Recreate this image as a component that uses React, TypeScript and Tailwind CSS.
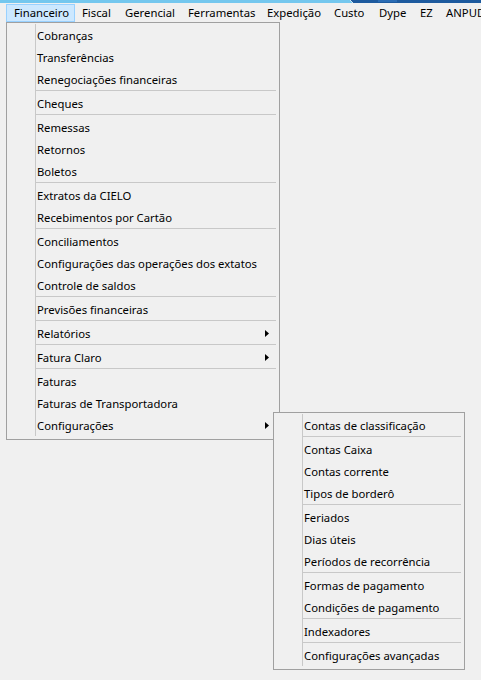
import { Fragment } from 'react';

type Entry = { label: string; sub?: boolean } | 'sep';

const bar = [
  { label: 'Financeiro', w: 'w-[69px]', active: true },
  { label: 'Fiscal', w: 'w-[43px]' },
  { label: 'Gerencial', w: 'w-[63px]' },
  { label: 'Ferramentas', w: 'w-[79px]' },
  { label: 'Expedição', w: 'w-[67px]' },
  { label: 'Custo', w: 'w-[45px]' },
  { label: 'Dype', w: 'w-[41px]' },
  { label: 'EZ', w: 'w-[26px]' },
  { label: 'ANPUD', w: 'w-[60px]' },
];

const financeiro: Entry[] = [
  { label: 'Cobranças' },
  { label: 'Transferências' },
  { label: 'Renegociações financeiras' },
  'sep',
  { label: 'Cheques' },
  'sep',
  { label: 'Remessas' },
  { label: 'Retornos' },
  { label: 'Boletos' },
  'sep',
  { label: 'Extratos da CIELO' },
  { label: 'Recebimentos por Cartão' },
  'sep',
  { label: 'Conciliamentos' },
  { label: 'Configurações das operações dos extatos' },
  { label: 'Controle de saldos' },
  'sep',
  { label: 'Previsões financeiras' },
  'sep',
  { label: 'Relatórios', sub: true },
  'sep',
  { label: 'Fatura Claro', sub: true },
  'sep',
  { label: 'Faturas' },
  { label: 'Faturas de Transportadora' },
  { label: 'Configurações', sub: true },
];

const configuracoes: Entry[] = [
  { label: 'Contas de classificação' },
  'sep',
  { label: 'Contas Caixa' },
  { label: 'Contas corrente' },
  { label: 'Tipos de borderô' },
  'sep',
  { label: 'Feriados' },
  { label: 'Dias úteis' },
  { label: 'Períodos de recorrência' },
  'sep',
  { label: 'Formas de pagamento' },
  { label: 'Condições de pagamento' },
  'sep',
  { label: 'Indexadores' },
  'sep',
  { label: 'Configurações avançadas' },
];

function Arrow() {
  return (
    <svg width="4" height="7" viewBox="0 0 4 7" className="block">
      <path d="M0 0 L4 3.5 L0 7 Z" fill="#000" />
    </svg>
  );
}

function Menu({ items, className }: { items: Entry[]; className: string }) {
  return (
    <div className={`absolute border border-[#a0a0a0] bg-[#f0f0f0] pt-[1px] pb-[3px] ${className}`}>
      {items.map((it, i) => (
        <Fragment key={i}>
          {it === 'sep' ? (
            <div className="flex h-[2px]">
              <div className="w-[28px] shrink-0" />
              <div className="flex-1 border-l border-[#c8c8c8] pr-[3px]">
                <div className="h-px bg-[#c8c8c8]" />
              </div>
            </div>
          ) : (
            <div className="flex h-[22px]">
              <div className="w-[28px] shrink-0" />
              <div className="flex flex-1 items-center justify-between border-l border-[#c8c8c8] pt-[2px] pl-[1px] pr-[10px]">
                <span className="whitespace-nowrap">{it.label}</span>
                {it.sub && (
                  <span className="-mt-[2px]">
                    <Arrow />
                  </span>
                )}
              </div>
            </div>
          )}
        </Fragment>
      ))}
    </div>
  );
}

export default function App() {
  return (
    <div className="relative h-[680px] w-[481px] overflow-hidden bg-[#f0f0f0] text-[11.3px] text-black [font-family:'Noto_Sans',sans-serif]">
      {/* window frame edge */}
      <svg width="481" height="3" viewBox="0 0 481 3" className="block">
        <rect width="481" height="3" fill="#74c7ee" />
        <path d="M350 0 H481 V3 H353 Z" fill="#1d5a9e" />
        <path d="M350 0 L353 3" stroke="#cfe6f5" strokeWidth="1" />
        <rect x="378" y="0" width="19" height="2" fill="#2a6cb4" />
      </svg>

      {/* menu bar */}
      <div className="flex h-[19px] items-center pl-[6px]">
        {bar.map((b) => (
          <div
            key={b.label}
            className={`flex h-[18px] shrink-0 items-center whitespace-nowrap pt-[1px] ${b.w} ${
              b.active ? 'border border-[#99d1ff] bg-[#cce8ff] pl-[7px]' : 'pl-[7px]'
            }`}
          >
            {b.label}
          </div>
        ))}
      </div>

      <Menu items={financeiro} className="left-[6px] top-[22px] w-[274px]" />
      <Menu items={configuracoes} className="left-[273px] top-[412px] w-[192px]" />
    </div>
  );
}
